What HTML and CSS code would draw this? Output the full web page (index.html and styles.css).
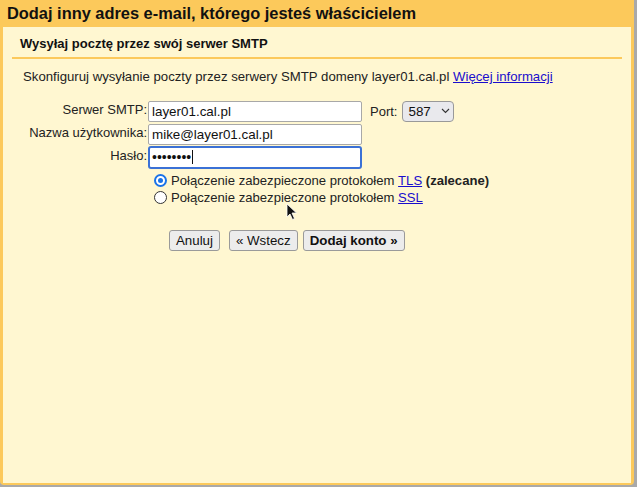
FILE: index.html
```html
<!DOCTYPE html>
<html lang="pl">
<head>
<meta charset="utf-8">
<title>Dodaj inny adres e-mail</title>
<link rel="stylesheet" href="styles.css">
</head>
<body>
<div class="dialog">
  <div class="title">Dodaj inny adres e-mail, którego jesteś właścicielem</div>
  <div class="panel">
    <div class="subtitle">Wysyłaj pocztę przez swój serwer SMTP</div>
    <div class="sep"></div>
    <p class="intro">Skonfiguruj wysyłanie poczty przez serwery SMTP domeny layer01.cal.pl <a href="#">Więcej informacji</a></p>
    <div class="form">
      <div class="row">
        <label class="lbl">Serwer SMTP:</label>
        <div class="field">layer01.cal.pl</div>
        <span class="port-lbl">Port:</span>
        <div class="select">587 <svg width="9" height="6" viewBox="0 0 9 6"><path d="M1 1 L4.5 4.5 L8 1" fill="none" stroke="#333" stroke-width="1.1"/></svg></div>
      </div>
      <div class="row">
        <label class="lbl">Nazwa użytkownika:</label>
        <div class="field">mike@layer01.cal.pl</div>
      </div>
      <div class="row">
        <label class="lbl">Hasło:</label>
        <div class="field focus"><span class="dots">••••••••</span><span class="caret"></span></div>
      </div>
      <div class="radios">
        <div class="radio-row"><span class="radio on"></span>Połączenie zabezpieczone protokołem&nbsp;<a href="#">TLS</a>&nbsp;<b>(zalecane)</b></div>
        <div class="radio-row"><span class="radio"></span>Połączenie zabezpieczone protokołem&nbsp;<a href="#">SSL</a></div>
      </div>
      <div class="buttons">
        <button class="btn">Anuluj</button>
        <button class="btn back">« Wstecz</button>
        <button class="btn bold">Dodaj konto »</button>
      </div>
    </div>
    <svg class="cursor" width="12" height="18" viewBox="0 0 12 18"><path d="M1 1 L1 14 L4 11 L6.5 16.5 L8.5 15.5 L6 10 L10.5 10 Z" fill="#111" stroke="#fff" stroke-width="0.8"/></svg>
  </div>
</div>
</body>
</html>
```
FILE: styles.css
```css
html, body {
  margin: 0;
  padding: 0;
  background: #a9a9a9;
}
body {
  width: 637px;
  height: 487px;
  font-family: "Liberation Sans", Arial, sans-serif;
  color: #111;
  overflow: hidden;
}
.dialog {
  width: 634px;
  height: 485px;
  background: #fcc95b;
  display: flex;
  flex-direction: column;
  border-radius: 0 0 4px 4px;
}
.title {
  height: 27px;
  line-height: 27px;
  padding-left: 7px;
  font-size: 16.4px;
  font-weight: bold;
  color: #111;
}
.panel {
  position: relative;
  flex: 1;
  margin: 0 3px 2px 3px;
  background: #fff7d1;
}
.subtitle {
  padding: 9px 0 0 17px;
  height: 19px;
  font-size: 13px;
  font-weight: bold;
}
.sep {
  margin: 2px 9px 0 9px;
  height: 2px;
  background: #fcc95b;
}
.intro {
  margin: 10px 0 0 20px;
  font-size: 13.2px;
  color: #222;
}
a {
  color: #1a0dcd;
  text-decoration: underline;
}
.form {
  margin-top: 16px;
  display: flex;
  flex-direction: column;
}
.row {
  display: flex;
  align-items: center;
  height: 22px;
}
.row + .row { margin-top: 1px; }
.lbl {
  width: 144px;
  text-align: right;
  font-size: 13px;
  color: #222;
  padding-bottom: 4px;
}
.field {
  box-sizing: border-box;
  width: 214px;
  height: 21px;
  margin-left: 1px;
  border: 1px solid #a8a8a8;
  border-radius: 2px;
  background: #fff;
  font-size: 13.4px;
  line-height: 19px;
  padding-left: 3px;
  display: flex;
  align-items: center;
}
.field.focus {
  border: 2px solid #3b71d6;
  height: 23px;
  border-radius: 3px;
  padding-left: 2px;
}
.dots {
  font-size: 14px;
  letter-spacing: 0;
}
.caret {
  width: 1px;
  height: 14px;
  background: #111;
  margin-left: 1px;
}
.port-lbl {
  margin-left: 8px;
  font-size: 13px;
  color: #222;
}
.select {
  box-sizing: border-box;
  margin-left: 5px;
  width: 52px;
  height: 21px;
  border: 1px solid #999;
  border-radius: 4px;
  background: #e9e9ed;
  font-size: 13.4px;
  display: flex;
  align-items: center;
  gap: 10px;
  padding-left: 5px;
}
.radios {
  margin-top: 5px;
  margin-left: 151px;
  display: flex;
  flex-direction: column;
  gap: 3px;
}
.radio-row {
  display: flex;
  align-items: center;
  font-size: 13.1px;
  color: #222;
  height: 14px;
}
.radio {
  box-sizing: border-box;
  width: 13px;
  height: 13px;
  border: 1px solid #333;
  border-radius: 50%;
  background: #fff;
  margin-right: 4px;
  position: relative;
}
.radio.on {
  border: 2px solid #1a73e8;
}
.radio.on::after {
  content: "";
  position: absolute;
  left: 2px;
  top: 2px;
  width: 5px;
  height: 5px;
  border-radius: 50%;
  background: #1a73e8;
}
.buttons {
  margin-top: 26px;
  margin-left: 166px;
  display: flex;
  gap: 5px;
}
.btn {
  height: 21px;
  padding: 0 6px;
  font-family: "Liberation Sans", Arial, sans-serif;
  font-size: 13.3px;
  color: #111;
  background: #ececec;
  border: 1px solid #9a9a9a;
  border-radius: 3px;
}
.btn.back { margin-left: 4px; }
.btn.bold { font-weight: bold; }
.cursor {
  position: absolute;
  left: 283px;
  top: 176px;
}
```
